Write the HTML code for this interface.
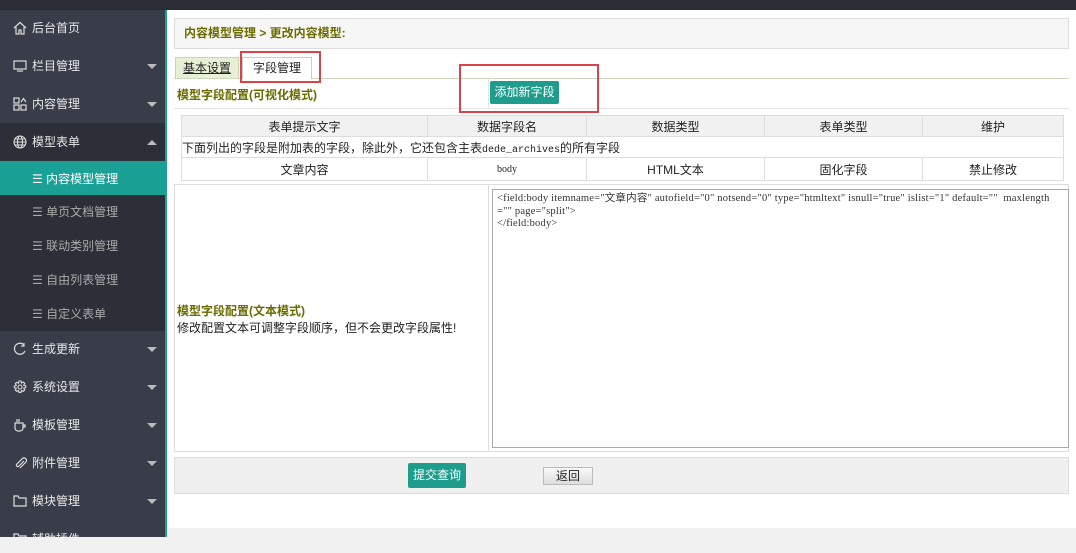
<!DOCTYPE html>
<html><head><meta charset="utf-8"><style>
*{margin:0;padding:0;box-sizing:border-box}
body{width:1076px;height:553px;overflow:hidden;background:#f1f1f1;font-family:"Liberation Sans","Noto Sans CJK SC",sans-serif;font-size:12px;color:#222;position:relative}
.a{position:absolute}
.top{left:0;top:0;width:1076px;height:10px;background:#2a2d35}
.side{left:0;top:10px;width:165px;height:527px;background:#393d49;overflow:hidden}
.tb{left:165px;top:10px;width:2px;height:527px;background:#1aa094}
.main{left:167px;top:10px;width:909px;height:518px;background:#fff}
.it{position:absolute;left:0;width:165px;height:38px;color:#e8e8e8;font-size:12px;line-height:38px;padding-left:32px}
.it .ic{position:absolute;left:13px;top:12px;width:14px;height:14px}
.it .ar{position:absolute;left:147px;top:17px;border-left:5px solid transparent;border-right:5px solid transparent;border-top:5px solid #bbb}
.it .up{border-top:none;border-bottom:5px solid #bbb}
.sub{color:#aaa;padding-left:32px}
.olive{color:#6b6b00;font-weight:bold}
.bx{border:1px solid #ddd}
table{border-collapse:collapse;position:absolute}
td{border:1px solid #ddd;text-align:center;height:21px;font-size:12px}
.btn{background:#1e9d8c;color:#fff;text-align:center;border-radius:2px}
</style></head><body>
<div class="a top"></div>
<div class="a side">
 <div class="it" style="top:-1px"><svg class="ic" viewBox="0 0 14 14" fill="none" stroke="#ddd" stroke-width="1.2"><path d="M1 7L7 1.5 13 7M3 6v7h3v-4h2v4h3V6"/></svg>后台首页</div>
 <div class="it" style="top:37px"><svg class="ic" viewBox="0 0 14 14" fill="none" stroke="#ddd" stroke-width="1.2"><rect x="1" y="2" width="12" height="8"/><path d="M4 12h6"/></svg>栏目管理<span class="ar"></span></div>
 <div class="it" style="top:75px"><svg class="ic" viewBox="0 0 14 14" fill="none" stroke="#ddd" stroke-width="1.2"><rect x="1" y="1" width="5" height="5"/><rect x="1" y="8" width="5" height="5"/><rect x="8" y="8" width="5" height="5"/><path d="M8 5l2.5-3.5L13 5"/></svg>内容管理<span class="ar"></span></div>
 <div class="it" style="top:113px;background:#2c2f38"><svg class="ic" viewBox="0 0 14 14" fill="none" stroke="#ddd" stroke-width="1.1"><circle cx="7" cy="7" r="6"/><ellipse cx="7" cy="7" rx="2.5" ry="6"/><path d="M1 7h12M2 4h10M2 10h10"/></svg>模型表单<span class="ar up"></span></div>
 <div class="it sub" style="top:151px;height:37px;line-height:37px;background:#1aa094;color:#fff">☰ 内容模型管理</div>
 <div class="it sub" style="top:185px;height:34px;line-height:34px;background:#2c2f38">☰ 单页文档管理</div>
 <div class="it sub" style="top:219px;height:34px;line-height:34px;background:#2c2f38">☰ 联动类别管理</div>
 <div class="it sub" style="top:253px;height:34px;line-height:34px;background:#2c2f38">☰ 自由列表管理</div>
 <div class="it sub" style="top:287px;height:34px;line-height:34px;background:#2c2f38">☰ 自定义表单</div>
 <div class="it" style="top:320px"><svg class="ic" viewBox="0 0 14 14" fill="none" stroke="#ddd" stroke-width="1.2"><path d="M11 3A5.5 5.5 0 1 0 12 9"/><path d="M11 1v3h-3"/></svg>生成更新<span class="ar"></span></div>
 <div class="it" style="top:358px"><svg class="ic" viewBox="0 0 14 14" fill="none" stroke="#ddd" stroke-width="1.1"><circle cx="7" cy="7" r="2"/><path d="M6 1h2l.5 2 1.8-1 1.4 1.4-1 1.8 2 .5v2l-2 .5 1 1.8-1.4 1.4-1.8-1-.5 2H6l-.5-2-1.8 1-1.4-1.4 1-1.8-2-.5V6l2-.5-1-1.8 1.4-1.4 1.8 1z"/></svg>系统设置<span class="ar"></span></div>
 <div class="it" style="top:396px"><svg class="ic" viewBox="0 0 14 14" fill="none" stroke="#ddd" stroke-width="1.2"><path d="M2 5h8v5a3 3 0 0 1-3 3H5a3 3 0 0 1-3-3zM10 7h2v2h-2M4 1v3M6 1v3"/></svg>模板管理<span class="ar"></span></div>
 <div class="it" style="top:434px"><svg class="ic" viewBox="0 0 14 14" fill="none" stroke="#ddd" stroke-width="1.2"><path d="M11 5L5.5 10.5a1.5 1.5 0 0 1-2-2L9.5 2.5a2.5 2.5 0 0 1 3.5 3.5L7 12"/></svg>附件管理<span class="ar"></span></div>
 <div class="it" style="top:472px"><svg class="ic" viewBox="0 0 14 14" fill="none" stroke="#ddd" stroke-width="1.2"><path d="M1 2h4l1 2h7v8H1z"/></svg>模块管理<span class="ar"></span></div>
 <div class="it" style="top:510px"><svg class="ic" viewBox="0 0 14 14" fill="none" stroke="#ddd" stroke-width="1.2"><path d="M1 2h4l1 2h7v8H1z"/></svg>辅助插件<span class="ar"></span></div>
</div>
<div class="a tb"></div>
<div class="a main"></div>

<div class="a bx olive" style="left:174px;top:18px;width:895px;height:31px;background:#f6f6f6;line-height:29px;padding-left:9px;font-size:12px">内容模型管理 &gt; 更改内容模型:</div>
<div class="a" style="left:174px;top:78px;width:895px;height:1px;background:#cfd8bf"></div>
<div class="a" style="left:175px;top:57px;width:64px;height:21px;background:#e6f0d5;border:1px solid #c8d4b4;border-bottom:none;text-align:center;line-height:20px;text-decoration:underline">基本设置</div>
<div class="a" style="left:242px;top:57px;width:70px;height:22px;background:#fff;border:1px solid #ccc;border-bottom:none;text-align:center;line-height:20px">字段管理</div>
<div class="a" style="left:240px;top:51px;width:81px;height:32px;border:2px solid #d9434a"></div>

<div class="a olive" style="left:177px;top:86px;font-size:12px">模型字段配置(可视化模式)</div>
<div class="a" style="left:174px;top:108px;width:895px;height:1px;background:#e5e5e5"></div>
<div class="a" style="left:488px;top:79px;width:1px;height:29px;background:#e5e5e5"></div>
<div class="a btn" style="left:490px;top:81px;width:69px;height:23px;line-height:23px">添加新字段</div>
<div class="a" style="left:459px;top:64px;width:140px;height:49px;border:2px solid #d9434a"></div>

<table style="left:181px;top:115px;width:883px">
<tr style="background:#f1f1f1"><td style="width:246px">表单提示文字</td><td style="width:159px">数据字段名</td><td style="width:178px">数据类型</td><td style="width:158px">表单类型</td><td>维护</td></tr>
<tr><td colspan="5" style="text-align:left">下面列出的字段是附加表的字段，除此外，它还包含主表<span style="font-family:'Liberation Mono',monospace;font-size:10px">dede_archives</span>的所有字段</td></tr>
<tr style="height:23px"><td>文章内容</td><td style="font-family:'Liberation Serif',serif;font-size:10px">body</td><td>HTML文本</td><td>固化字段</td><td>禁止修改</td></tr>
</table>

<div class="a bx" style="left:174px;top:184px;width:895px;height:268px"></div>
<div class="a" style="left:488px;top:184px;width:1px;height:268px;background:#ddd"></div>
<div class="a olive" style="left:177px;top:302px">模型字段配置(文本模式)</div>
<div class="a" style="left:177px;top:319px">修改配置文本可调整字段顺序，但不会更改字段属性!</div>
<div class="a" style="left:492px;top:189px;width:577px;height:259px;border:1px solid #aaa;padding:3px 4px;font-family:'Liberation Serif','Noto Sans CJK SC',serif;font-size:10.5px;line-height:12.5px;word-break:break-all;color:#333;letter-spacing:0.2px">&lt;field:body itemname="文章内容" autofield="0" notsend="0" type="htmltext" isnull="true" islist="1" default=""&nbsp; maxlength="" page="split"&gt;<br>&lt;/field:body&gt;</div>

<div class="a bx" style="left:174px;top:457px;width:895px;height:37px;background:#f0f0f0"></div>
<div class="a btn" style="left:408px;top:463px;width:58px;height:25px;line-height:25px">提交查询</div>
<div class="a" style="left:543px;top:467px;width:50px;height:18px;background:linear-gradient(#fafafa,#ddd);border:1px solid #bbb;text-align:center;line-height:16px">返回</div>
</body></html>
